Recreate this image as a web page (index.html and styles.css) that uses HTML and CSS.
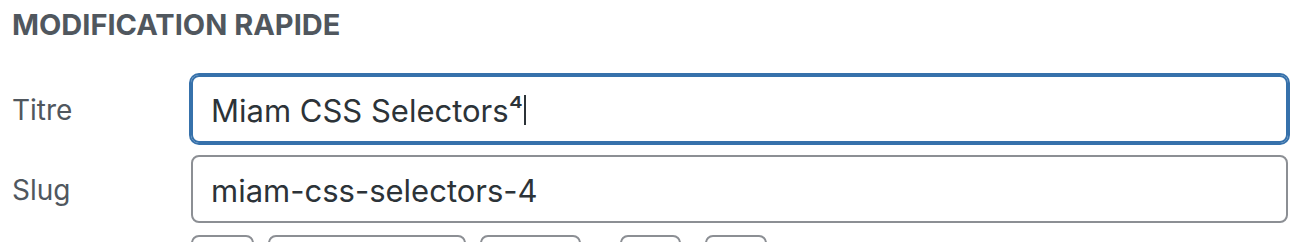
FILE: index.html
```html
<!DOCTYPE html>
<html lang="fr">
<head>
<meta charset="utf-8">
<title>Modification rapide</title>
<link rel="stylesheet" href="styles.css">
</head>
<body>
<fieldset class="quick-edit">
  <legend class="legend">Modification rapide</legend>
  <div class="row">
    <span class="label">Titre</span>
    <div class="field is-focused"><span class="value">Miam CSS Selectors⁴</span><span class="caret"></span></div>
  </div>
  <div class="row">
    <span class="label">Slug</span>
    <div class="field"><span class="value">miam-css-selectors-4</span></div>
  </div>
  <div class="row date-row">
    <span class="label"></span>
    <div class="date-fields">
      <span class="box box-day"></span>
      <span class="box box-month"></span>
      <span class="box box-year"></span>
      <span class="sep sep-at"></span>
      <span class="box box-hour"></span>
      <span class="sep sep-colon"></span>
      <span class="box box-min"></span>
    </div>
  </div>
</fieldset>
</body>
</html>
```

FILE: styles.css
```css
html, body {
  margin: 0;
  padding: 0;
  background: #ffffff;
  overflow: hidden;
}

body {
  width: 1306px;
  height: 242px;
  font-family: Inter, "Liberation Sans", sans-serif;
  color: #50575e;
}

.quick-edit {
  margin: 0;
  padding: 0 18px 0 12px;
  border: 0;
  min-width: 0;
}

.legend {
  display: block;
  float: left;
  width: 100%;
  padding: 0;
  margin: 10px 0 0 0;
  font-size: 29px;
  line-height: 30px;
  font-weight: 700;
  text-transform: uppercase;
  color: #50575e;
}

.row {
  clear: both;
  display: flex;
  align-items: center;
}

.row + .row {
  margin-top: 12px;
}

.quick-edit .row:first-of-type {
  padding-top: 35px;
}

.label {
  flex: 0 0 179px;
  font-size: 28px;
  padding-top: 2px;
  color: #50575e;
}

.field {
  flex: 1 1 auto;
  height: 68px;
  box-sizing: border-box;
  border: 2px solid #8c8f94;
  border-radius: 8px;
  padding: 2px 18px 0;
  display: flex;
  align-items: center;
  font-size: 31px;
  color: #2c3338;
}

.field.is-focused {
  border-color: #3671ab;
  box-shadow: 0 0 0 2px #3671ab;
}

.caret {
  display: inline-block;
  width: 2px;
  height: 30px;
  margin-left: 1px;
  background: #2c3338;
}

.date-row {
  align-items: flex-start;
}

.date-fields {
  display: flex;
  align-items: flex-start;
}

.box {
  display: block;
  height: 60px;
  box-sizing: border-box;
  border: 2px solid #8c8f94;
  border-radius: 8px;
  margin-right: 14px;
}

.box-day { width: 63px; }
.box-month { width: 198px; }
.box-year { width: 101px; margin-right: 0; }
.sep-at { width: 39px; }
.box-hour { width: 61px; margin-right: 0; }
.sep-colon { width: 24px; }
.box-min { width: 62px; }
```
